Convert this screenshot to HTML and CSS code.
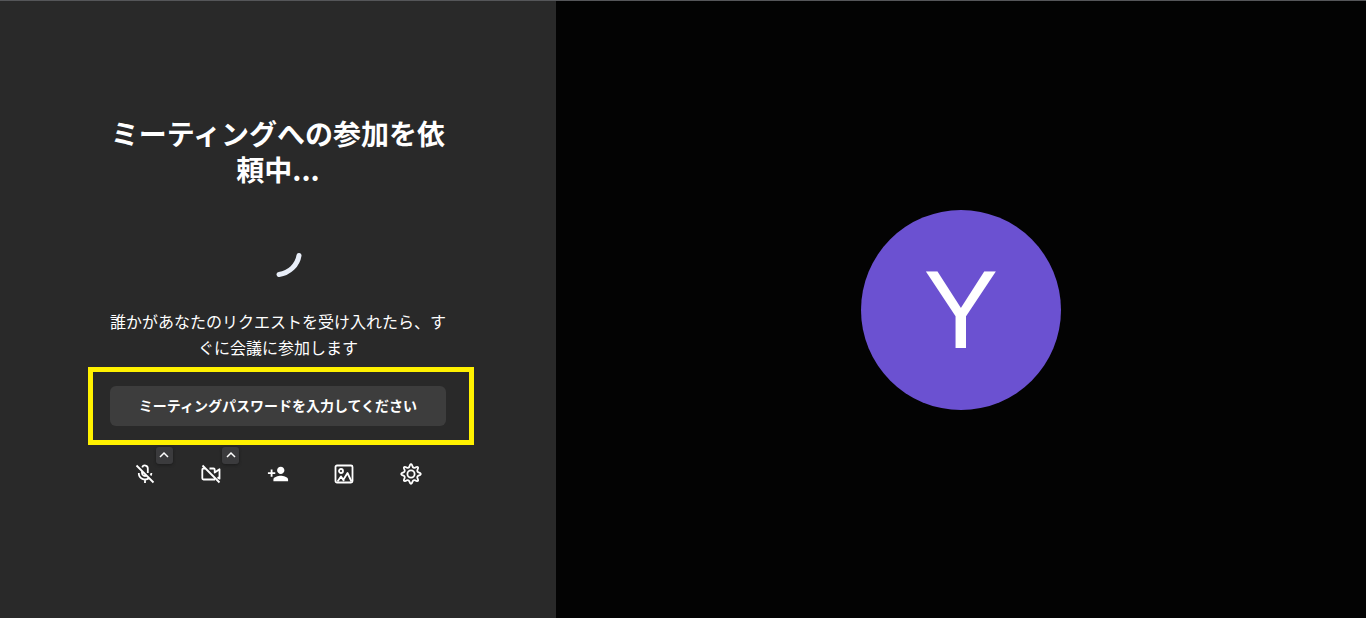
FILE: index.html
```html
<!DOCTYPE html>
<html lang="ja">
<head>
<meta charset="utf-8">
<meta name="viewport" content="width=device-width, initial-scale=1">
<title>ミーティングへの参加を依頼中</title>
<link rel="stylesheet" href="styles.css">
</head>
<body>
<div class="app">
  <main class="panel">
    <div class="content">
      <h1 class="title">ミーティングへの参加を依頼中...</h1>
      <svg class="spinner" viewBox="0 0 48 48" role="img" aria-label="読み込み中"><path d="M45 26.500C43.500 36 35.500 44 25 45.500"/></svg>
      <p class="message">誰かがあなたのリクエストを受け入れたら、すぐに会議に参加します</p>
      <div class="highlight">
        <button class="password" type="button">ミーティングパスワードを入力してください</button>
      </div>
      <div class="toolbar">
        <div class="tool">
          <button class="tool-button" type="button" aria-label="マイク">
            <svg class="icon" viewBox="0 0 24 24"><path d="M9 9v2a3 3 0 0 0 5 2.200M9.200 5.300a2.900 2.900 0 0 1 5.600 1.200v4.500M5.800 11a6.200 6.200 0 0 0 10.400 4.800M18.400 11a6.500 6.500 0 0 1-.7 2.500M12 17.500V21M3.500 3.500l17 17"/></svg>
          </button>
          <button class="more" type="button" aria-label="マイクの設定"><svg class="chevron" viewBox="0 0 10 10"><path d="M1 7l4-4 4 4"/></svg></button>
        </div>
        <div class="tool">
          <button class="tool-button" type="button" aria-label="カメラ">
            <svg class="icon" viewBox="0 0 24 24"><path d="M6 6.500H4.500Q3.300 6.500 3.300 7.700V16.300Q3.300 17.500 4.500 17.500H16M10.500 6.500H14.500Q15.700 6.500 15.700 7.700V10.500L20.500 7.300V16.700L18.500 15.300M3.500 3.500l17 17"/></svg>
          </button>
          <button class="more" type="button" aria-label="カメラの設定"><svg class="chevron" viewBox="0 0 10 10"><path d="M1 7l4-4 4 4"/></svg></button>
        </div>
        <div class="tool">
          <button class="tool-button" type="button" aria-label="招待">
            <svg class="icon icon-solid" viewBox="0 0 24 24"><path d="M15 12c2.210 0 4-1.790 4-4s-1.790-4-4-4-4 1.790-4 4 1.790 4 4 4zm-9-2V7H4v3H1v2h3v3h2v-3h3v-2H6zm9 4c-2.670 0-8 1.340-8 4v2h16v-2c0-2.660-5.330-4-8-4z"/></svg>
          </button>
        </div>
        <div class="tool">
          <button class="tool-button" type="button" aria-label="背景">
            <svg class="icon" viewBox="0 0 24 24"><rect x="3.500" y="3.500" width="17" height="17" rx="1.500"/><circle cx="9" cy="9" r="2"/><path d="M5.500 19.500l3.500-5 3 4.500M11.500 17.500l4-6.500 4 8.500"/></svg>
          </button>
        </div>
        <div class="tool">
          <button class="tool-button" type="button" aria-label="設定">
            <svg class="icon" viewBox="0 0 24 24"><circle cx="12" cy="12" r="3.600"/><path d="M10.900 3.200Q12 1.200 13.100 3.200Q14 7.200 17.440 5Q19.640 4.360 19 6.560Q16.800 10 20.800 10.900Q22.800 12 20.800 13.100Q16.800 14 19 17.440Q19.640 19.640 17.440 19Q14 16.800 13.100 20.800Q12 22.800 10.900 20.800Q10 16.800 6.560 19Q4.360 19.640 5 17.440Q7.200 14 3.200 13.100Q1.200 12 3.200 10.900Q7.200 10 5 6.560Q4.360 4.360 6.560 5Q10 7.200 10.900 3.200Z"/></svg>
          </button>
        </div>
      </div>
    </div>
  </main>
  <section class="stage" aria-label="プレビュー">
    <div class="avatar">Y</div>
  </section>
</div>
</body>
</html>
```
FILE: styles.css
```css
* {
  box-sizing: border-box;
}

body {
  margin: 0;
  background: #030303;
  color: #fff;
  font-family: "Noto Sans CJK JP", sans-serif;
}

button {
  padding: 0;
  border: 0;
  color: inherit;
  font: inherit;
  cursor: pointer;
}

.app {
  display: flex;
  min-height: 100vh;
  border-top: 1px solid #555659;
}

.panel {
  display: flex;
  flex: 0 0 40.7%;
  align-items: center;
  justify-content: center;
  padding-bottom: 7px;
  background: #292929;
}

.content {
  display: flex;
  flex-direction: column;
  width: 336px;
}

.title {
  margin: 0;
  font-size: 28px;
  font-weight: 700;
  line-height: 36px;
  text-align: center;
}

.spinner {
  width: 48px;
  height: 48px;
  margin: 42px auto 31px;
  fill: none;
  stroke: #e8eef8;
  stroke-width: 5;
  stroke-linecap: round;
}

.message {
  margin: 0;
  font-size: 16px;
  line-height: 26px;
  text-align: center;
}

.highlight {
  margin: 7px -28px 0 -22px;
  padding: 14px 23px 14px 17px;
  border: 5px solid #fff100;
}

.password {
  display: block;
  width: 100%;
  height: 40px;
  padding-bottom: 2px;
  border-radius: 6px;
  background: #3d3d3d;
  font-size: 14px;
  font-weight: 700;
}

.toolbar {
  display: flex;
  justify-content: space-between;
  margin-top: 5px;
  padding: 0 11px;
}

.tool {
  position: relative;
}

.tool-button {
  display: grid;
  place-items: center;
  width: 48px;
  height: 48px;
  background: transparent;
}

.icon {
  width: 24px;
  height: 24px;
  fill: none;
  stroke: #fff;
  stroke-width: 1.8;
  stroke-linejoin: round;
}

.icon-solid {
  width: 22px;
  height: 22px;
  fill: #fff;
  stroke: none;
}

.more {
  position: absolute;
  top: -3px;
  right: -4px;
  display: grid;
  place-items: center;
  width: 17px;
  height: 17px;
  border-radius: 3px;
  background: #3b3b3d;
  box-shadow: 0 1px 3px #1c1c1c;
}

.chevron {
  width: 10px;
  height: 10px;
  fill: none;
  stroke: #fff;
  stroke-width: 1.5;
}

.stage {
  display: grid;
  flex: 1;
  place-items: center;
}

.avatar {
  display: grid;
  place-items: center;
  width: 200px;
  height: 200px;
  border-radius: 50%;
  background: #6b51d1;
  font-family: "Liberation Sans", sans-serif;
  font-size: 112px;
  line-height: 1;
}
```
